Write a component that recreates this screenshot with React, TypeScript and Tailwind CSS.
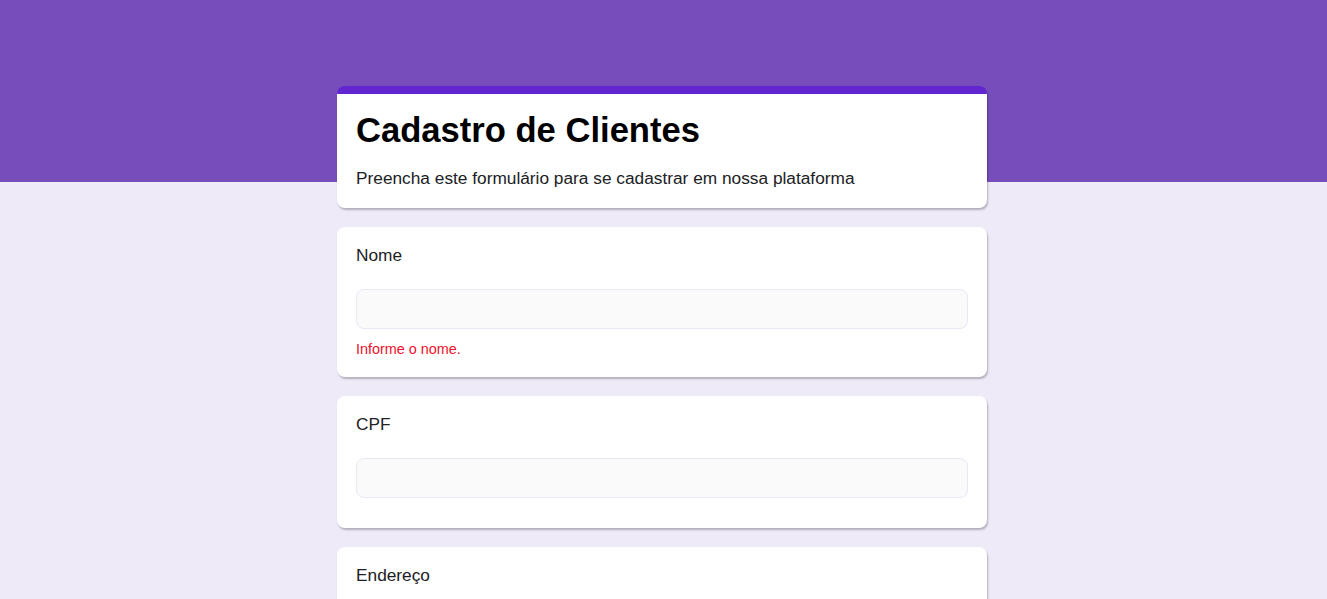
import React from "react";

const font = { fontFamily: '"Liberation Sans", Arial, Helvetica, sans-serif' };

function Field({ label, error }: { label: string; error?: string }) {
  return (
    <div className="bg-white rounded-lg shadow-[1px_2px_2px_rgba(0,0,0,0.25)] px-[19px] pt-[18px] pb-[19px] mb-[19px]">
      <div className="text-[17.3px] leading-[20px] text-[#202124]">{label}</div>
      <input
        className="block w-full h-[40px] mt-[24px] mb-[11px] rounded-lg bg-[#fbfafa] border border-[#ebe6f7] outline-none px-3"
        type="text"
      />
      {error && <div className="text-[14.4px] leading-[17px] pt-[1px] text-[#f0102a]">{error}</div>}
    </div>
  );
}

export default function App() {
  return (
    <div className="min-h-screen bg-[#efeaf8] relative" style={font}>
      <div className="h-[182px] bg-[#764dbb]" />
      <div className="-mt-[96px] flex justify-center pr-[3px] pb-10">
        <div className="w-[650px]">
          <div className="bg-white rounded-lg border-t-[8px] border-[#6226d0] shadow-[1px_2px_2px_rgba(0,0,0,0.25)] px-[19px] pt-[16px] pb-[20px] mb-[19px]">
            <h1 className="text-[34.6px] leading-[40px] font-bold text-black">Cadastro de Clientes</h1>
            <p className="mt-[18px] text-[17.3px] leading-[20px] text-[#202124]">
              Preencha este formulário para se cadastrar em nossa plataforma
            </p>
          </div>
          <Field label="Nome" error="Informe o nome." />
          <Field label="CPF" />
          <Field label="Endereço" />
          <Field label="Telefone" />
        </div>
      </div>
    </div>
  );
}
